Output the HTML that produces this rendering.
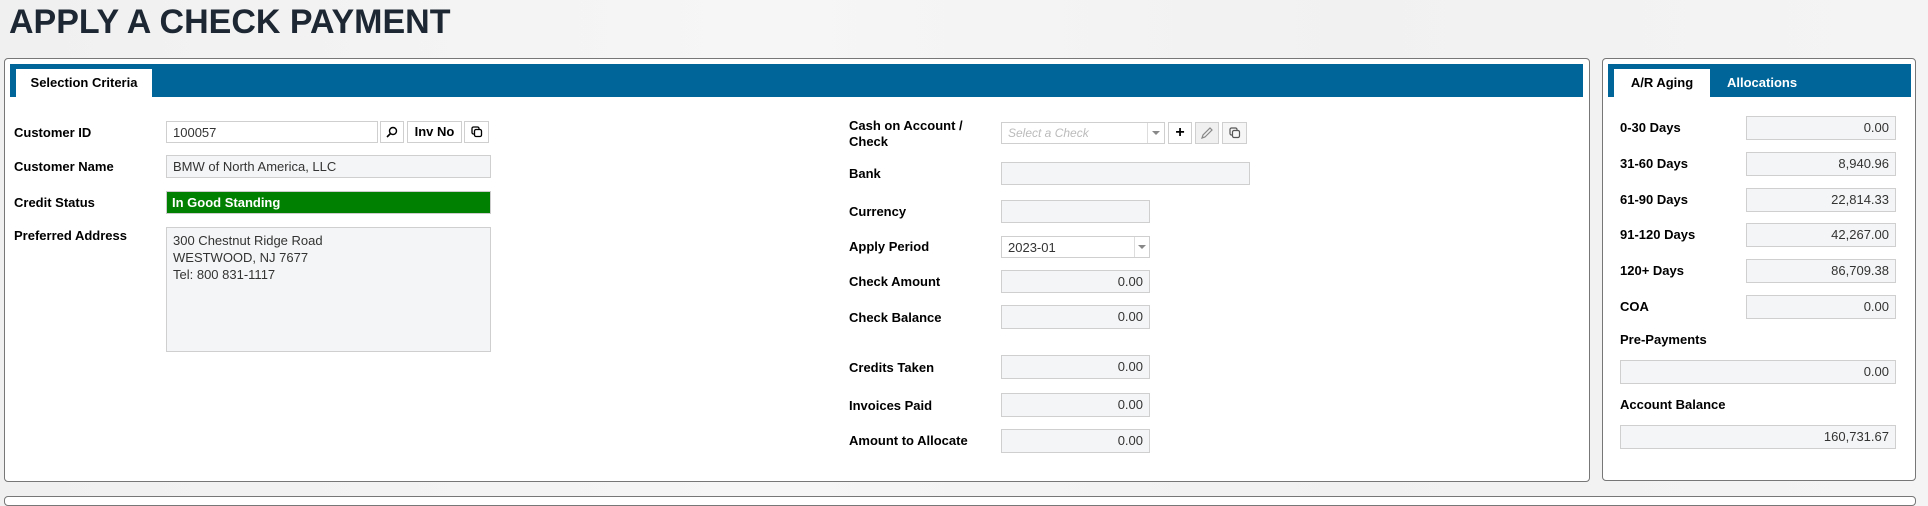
<!DOCTYPE html>
<html><head><meta charset="utf-8"><style>
*{box-sizing:border-box;margin:0;padding:0}
body{width:1928px;height:499px;overflow:hidden;background:linear-gradient(90deg,#f0f0f0,#f6f6f6 40%,#f1f1f1 70%,#f4f4f4);font-family:"Liberation Sans",sans-serif;position:relative}
.a{position:absolute}
h1{position:absolute;left:9px;top:3px;font-size:34px;font-weight:bold;color:#1c2733;letter-spacing:0px;white-space:nowrap}
.panel{position:absolute;background:#fff;border:1px solid #777;border-radius:4px}
.bar{position:absolute;background:#006699}
.tab{position:absolute;background:#fff;font-size:13px;font-weight:bold;color:#000;text-align:center;line-height:28px}
.lbl{position:absolute;font-size:13px;font-weight:bold;color:#000;white-space:nowrap;line-height:16px}
.in{position:absolute;background:#f4f5f6;border:1px solid #cfcfcf;font-size:13px;color:#333;line-height:21px;padding:0 6px;text-align:right;white-space:nowrap}
.w{background:#fff;text-align:left}
.btn{position:absolute;background:#fff;border:1px solid #cfcfcf;font-size:13px;font-weight:bold;text-align:center;line-height:20px}
</style></head><body>
<h1>APPLY A CHECK PAYMENT</h1>

<div class="panel" style="left:4px;top:58px;width:1586px;height:424px"></div>
<div class="bar" style="left:10px;top:64px;width:1573px;height:33px"></div>
<div class="tab" style="left:16px;top:69px;width:136px">Selection Criteria</div>

<div class="lbl" style="left:14px;top:125px">Customer ID</div>
<div class="in w" style="left:166px;top:121px;width:212px;height:22px">100057</div>
<div class="btn" style="left:380px;top:121px;width:24px;height:22px"><svg width="12" height="12" viewBox="0 0 12 12" style="margin-top:4px"><circle cx="7" cy="5" r="3.5" fill="none" stroke="#000" stroke-width="1.4"/><path d="M4.5 7.5L1 11" stroke="#000" stroke-width="1.6"/></svg></div>
<div class="btn" style="left:407px;top:121px;width:55px;height:22px">Inv No</div>
<div class="btn" style="left:464px;top:121px;width:25px;height:22px"><svg width="12" height="12" viewBox="0 0 12 12" style="margin-top:4px"><rect x="1" y="1" width="7" height="7" rx="1.5" fill="none" stroke="#000" stroke-width="1.3"/><rect x="3.5" y="3.5" width="7" height="7" rx="1.5" fill="#fff" stroke="#000" stroke-width="1.3"/></svg></div>

<div class="lbl" style="left:14px;top:159px">Customer Name</div>
<div class="in" style="left:166px;top:155px;width:325px;height:23px;text-align:left">BMW of North America, LLC</div>

<div class="lbl" style="left:14px;top:195px">Credit Status</div>
<div class="a" style="left:166px;top:191px;width:325px;height:23px;background:#008000;border:1px solid #ccc;color:#fff;font-size:13px;font-weight:bold;line-height:21px;padding-left:5px">In Good Standing</div>

<div class="lbl" style="left:14px;top:228px">Preferred Address</div>
<div class="in" style="left:166px;top:227px;width:325px;height:125px;text-align:left;line-height:17px;padding-top:4px">300 Chestnut Ridge Road<br>WESTWOOD, NJ 7677<br>Tel: 800 831-1117</div>

<div class="lbl" style="left:849px;top:118px">Cash on Account /<br>Check</div>
<div class="in w" style="left:1001px;top:122px;width:164px;height:22px;color:#bbb;font-style:italic;font-size:12px">Select a Check</div>
<div class="a" style="left:1147px;top:123px;width:1px;height:20px;background:#ddd"></div>
<div class="a" style="left:1152px;top:131px;border:4px solid transparent;border-top:4px solid #888"></div>
<div class="btn" style="left:1168px;top:122px;width:24px;height:22px;font-size:16px">+</div>
<div class="btn" style="left:1195px;top:122px;width:24px;height:22px;background:#f0f0f0"><svg width="14" height="14" viewBox="0 0 14 14" style="margin-top:3px"><path d="M2 12L3 9L10 2L12 4L5 11Z" fill="none" stroke="#888" stroke-width="1.2"/></svg></div>
<div class="btn" style="left:1222px;top:122px;width:25px;height:22px;background:#f6f6f6"><svg width="12" height="12" viewBox="0 0 12 12" style="margin-top:4px"><rect x="1" y="1" width="7" height="7" rx="1.5" fill="none" stroke="#555" stroke-width="1.2"/><rect x="3.5" y="3.5" width="7" height="7" rx="1.5" fill="#f6f6f6" stroke="#555" stroke-width="1.2"/></svg></div>

<div class="lbl" style="left:849px;top:166px">Bank</div>
<div class="in" style="left:1001px;top:162px;width:249px;height:23px"></div>
<div class="lbl" style="left:849px;top:204px">Currency</div>
<div class="in" style="left:1001px;top:200px;width:149px;height:23px"></div>
<div class="lbl" style="left:849px;top:239px">Apply Period</div>
<div class="in w" style="left:1001px;top:236px;width:149px;height:22px">2023-01</div>
<div class="a" style="left:1134px;top:237px;width:1px;height:20px;background:#ddd"></div>
<div class="a" style="left:1138px;top:245px;border:4px solid transparent;border-top:4px solid #888"></div>

<div class="lbl" style="left:849px;top:274px">Check Amount</div>
<div class="in" style="left:1001px;top:270px;width:149px;height:23px">0.00</div>
<div class="lbl" style="left:849px;top:310px">Check Balance</div>
<div class="in" style="left:1001px;top:305px;width:149px;height:24px">0.00</div>
<div class="lbl" style="left:849px;top:360px">Credits Taken</div>
<div class="in" style="left:1001px;top:355px;width:149px;height:24px">0.00</div>
<div class="lbl" style="left:849px;top:398px">Invoices Paid</div>
<div class="in" style="left:1001px;top:393px;width:149px;height:24px">0.00</div>
<div class="lbl" style="left:849px;top:433px">Amount to Allocate</div>
<div class="in" style="left:1001px;top:429px;width:149px;height:24px">0.00</div>

<div class="panel" style="left:1602px;top:58px;width:314px;height:423px"></div>
<div class="bar" style="left:1608px;top:64px;width:303px;height:33px"></div>
<div class="tab" style="left:1614px;top:69px;width:96px">A/R Aging</div>
<div class="lbl" style="left:1727px;top:75px;color:#fff">Allocations</div>

<div class="lbl" style="left:1620px;top:120px">0-30 Days</div>
<div class="in" style="left:1746px;top:116px;width:150px;height:24px">0.00</div>
<div class="lbl" style="left:1620px;top:156px">31-60 Days</div>
<div class="in" style="left:1746px;top:152px;width:150px;height:24px">8,940.96</div>
<div class="lbl" style="left:1620px;top:192px">61-90 Days</div>
<div class="in" style="left:1746px;top:188px;width:150px;height:24px">22,814.33</div>
<div class="lbl" style="left:1620px;top:227px">91-120 Days</div>
<div class="in" style="left:1746px;top:223px;width:150px;height:24px">42,267.00</div>
<div class="lbl" style="left:1620px;top:263px">120+ Days</div>
<div class="in" style="left:1746px;top:259px;width:150px;height:24px">86,709.38</div>
<div class="lbl" style="left:1620px;top:299px">COA</div>
<div class="in" style="left:1746px;top:295px;width:150px;height:24px">0.00</div>
<div class="lbl" style="left:1620px;top:332px">Pre-Payments</div>
<div class="in" style="left:1620px;top:360px;width:276px;height:24px">0.00</div>
<div class="lbl" style="left:1620px;top:397px">Account Balance</div>
<div class="in" style="left:1620px;top:425px;width:276px;height:24px">160,731.67</div>

<div class="a" style="left:4px;top:496px;width:1912px;height:10px;border:1px solid #777;border-radius:4px;background:#fff"></div>
</body></html>
